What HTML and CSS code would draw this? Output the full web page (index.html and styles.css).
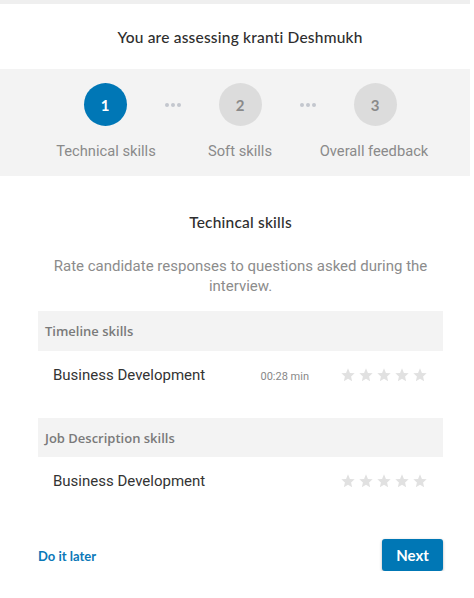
FILE: index.html
```html
<!DOCTYPE html>
<html>
<head>
<meta charset="utf-8">
<link rel="stylesheet" href="styles.css">
</head>
<body>
<div class="modal">
  <div class="topbar"></div>
  <header class="title"><span>You are assessing kranti Deshmukh</span></header>
  <section class="stepper">
    <div class="circles">
      <div class="circle active">1</div>
      <div class="dots"><i></i><i></i><i></i></div>
      <div class="circle">2</div>
      <div class="dots"><i></i><i></i><i></i></div>
      <div class="circle">3</div>
    </div>
    <div class="labels">
      <div class="label">Technical skills</div>
      <div class="label">Soft skills</div>
      <div class="label">Overall feedback</div>
    </div>
  </section>
  <main class="content">
    <h2 class="heading">Techincal skills</h2>
    <p class="desc">Rate candidate responses to questions asked during the interview.</p>

    <div class="group">
      <div class="group-head">Timeline skills</div>
      <div class="row">
        <span class="name">Business Development</span>
        <span class="time">00:28 min</span>
        <span class="stars">
          <svg viewBox="0 0 24 24"><path d="M12 2l2.9 6.9 7.1.6-5.4 4.7 1.6 7.1L12 17.6 5.8 21.3l1.6-7.1L2 9.5l7.1-.6z"/></svg>
          <svg viewBox="0 0 24 24"><path d="M12 2l2.9 6.9 7.1.6-5.4 4.7 1.6 7.1L12 17.6 5.8 21.3l1.6-7.1L2 9.5l7.1-.6z"/></svg>
          <svg viewBox="0 0 24 24"><path d="M12 2l2.9 6.9 7.1.6-5.4 4.7 1.6 7.1L12 17.6 5.8 21.3l1.6-7.1L2 9.5l7.1-.6z"/></svg>
          <svg viewBox="0 0 24 24"><path d="M12 2l2.9 6.9 7.1.6-5.4 4.7 1.6 7.1L12 17.6 5.8 21.3l1.6-7.1L2 9.5l7.1-.6z"/></svg>
          <svg viewBox="0 0 24 24"><path d="M12 2l2.9 6.9 7.1.6-5.4 4.7 1.6 7.1L12 17.6 5.8 21.3l1.6-7.1L2 9.5l7.1-.6z"/></svg>
        </span>
      </div>
    </div>

    <div class="group second">
      <div class="group-head">Job Description skills</div>
      <div class="row">
        <span class="name">Business Development</span>
        <span class="stars">
          <svg viewBox="0 0 24 24"><path d="M12 2l2.9 6.9 7.1.6-5.4 4.7 1.6 7.1L12 17.6 5.8 21.3l1.6-7.1L2 9.5l7.1-.6z"/></svg>
          <svg viewBox="0 0 24 24"><path d="M12 2l2.9 6.9 7.1.6-5.4 4.7 1.6 7.1L12 17.6 5.8 21.3l1.6-7.1L2 9.5l7.1-.6z"/></svg>
          <svg viewBox="0 0 24 24"><path d="M12 2l2.9 6.9 7.1.6-5.4 4.7 1.6 7.1L12 17.6 5.8 21.3l1.6-7.1L2 9.5l7.1-.6z"/></svg>
          <svg viewBox="0 0 24 24"><path d="M12 2l2.9 6.9 7.1.6-5.4 4.7 1.6 7.1L12 17.6 5.8 21.3l1.6-7.1L2 9.5l7.1-.6z"/></svg>
          <svg viewBox="0 0 24 24"><path d="M12 2l2.9 6.9 7.1.6-5.4 4.7 1.6 7.1L12 17.6 5.8 21.3l1.6-7.1L2 9.5l7.1-.6z"/></svg>
        </span>
      </div>
    </div>

    <footer class="footer">
      <a class="later">Do it later</a>
      <button class="next">Next</button>
    </footer>
  </main>
</div>
</body>
</html>
```
FILE: styles.css
```css
html, body {
  margin: 0;
  padding: 0;
  background: #ffffff;
}
.modal {
  width: 470px;
  background: #ffffff;
  font-family: "Lato", "Noto Sans", sans-serif;
}
.topbar {
  height: 4px;
  background: #efefef;
}
.title {
  height: 65px;
  display: flex;
  align-items: center;
  justify-content: center;
  padding-left: 10px;
  box-sizing: border-box;
  font-size: 15.5px;
  font-weight: 500;
  color: #2e2e2e;
  letter-spacing: 0.2px;
}
.stepper {
  background: #f3f3f3;
  padding: 14px 0 15px 10px;
  height: 107px;
  box-sizing: border-box;
}
.circles {
  display: flex;
  justify-content: center;
  align-items: center;
  gap: 38px;
}
.circle {
  width: 43px;
  height: 43px;
  border-radius: 50%;
  background: #dcdcdc;
  color: #8a8a8a;
  display: flex;
  align-items: center;
  justify-content: center;
  font-size: 15px;
  font-weight: 700;
}
.circle.active {
  background: #0077b6;
  color: #ffffff;
}
.dots {
  display: flex;
  gap: 2px;
  width: 16px;
}
.dots i {
  width: 4px;
  height: 4px;
  border-radius: 50%;
  background: #c3c7ce;
}
.labels {
  display: flex;
  justify-content: center;
  margin-top: 15px;
}
.label {
  width: 134px;
  text-align: center;
  font-family: "Roboto", sans-serif;
  font-size: 14.7px;
  line-height: 20px;
  color: #8a8a8a;
  white-space: nowrap;
}
.content {
  margin-left: 38px;
  width: 405px;
}
.heading {
  margin: 36px 0 0;
  text-align: center;
  font-size: 15.5px;
  line-height: 20px;
  font-weight: 500;
  color: #2e2e2e;
  letter-spacing: 0.2px;
}
.desc {
  margin: 24px 0 0;
  text-align: center;
  font-family: "Roboto", sans-serif;
  font-size: 15px;
  line-height: 20px;
  color: #8c8c8c;
  padding: 0 10px;
}
.group {
  margin-top: 15px;
}
.group.second {
  margin-top: 19px;
}
.group-head {
  height: 40px;
  background: #f3f3f3;
  display: flex;
  align-items: center;
  padding-left: 7px;
  font-family: "Open Sans", sans-serif;
  font-size: 13px;
  font-weight: 600;
  color: #7a7a7a;
}
.group.second .group-head {
  height: 39px;
}
.row {
  height: 48px;
  display: flex;
  align-items: center;
  padding: 0 15px;
}
.name {
  flex: 1;
  font-family: "Roboto", sans-serif;
  font-size: 15px;
  color: #333333;
}
.time {
  font-family: "Roboto", sans-serif;
  font-size: 11px;
  color: #888888;
  margin-top: 3px;
  margin-right: 31px;
}
.stars {
  display: flex;
  gap: 2px;
  margin-top: -1px;
}
.stars svg {
  width: 16px;
  height: 16px;
  fill: #e1e1e1;
}
.footer {
  margin-top: 34px;
  display: flex;
  align-items: center;
  justify-content: space-between;
}
.later {
  font-size: 13px;
  font-weight: 700;
  color: #0b78b8;
  margin-top: 1px;
}
.next {
  width: 61px;
  height: 32px;
  border: none;
  border-radius: 3px;
  background: #0077b5;
  color: #ffffff;
  font-family: "Lato", sans-serif;
  font-size: 15px;
  font-weight: 700;
  box-shadow: 0 1px 3px rgba(0, 0, 0, 0.3);
}
```
